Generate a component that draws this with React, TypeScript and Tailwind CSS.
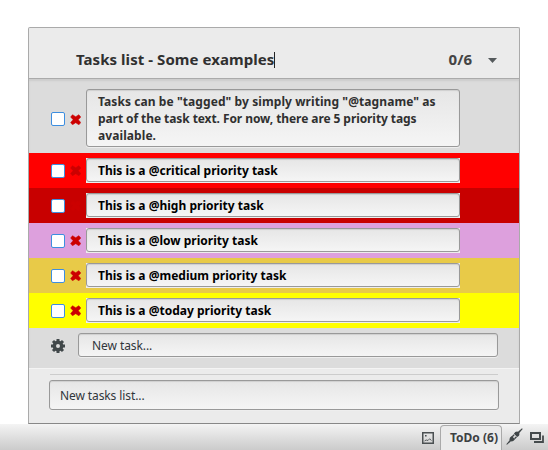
import React from 'react';

const field =
  'rounded-[3px] border border-[#999] bg-gradient-to-b from-[#e6e6e6] to-[#f5f5f5] shadow-[inset_0_1px_1px_#cfcfcf,0_1px_0_#eeeeee]';

function Cross() {
  return (
    <svg className="ml-[5px] h-[11px] w-[11px] shrink-0" viewBox="0 0 11 11" fill="#cc0000">
      <path d="M2.5 .7 5.7 2.7 8.8 .7 10.8 3 8.3 5.7 10.8 8.6 8.9 10.8 5.7 8.7 2.5 10.8 .6 8.6 3.1 5.7 .6 3Z" stroke="#cc0000" strokeWidth=".5" />
    </svg>
  );
}

function Controls() {
  return (
    <>
      <span className="h-[14px] w-[14px] shrink-0 rounded-[2px] border border-[#3d8ee0] bg-white" />
      <Cross />
    </>
  );
}

function Task({ color, text }: { color: string; text: string }) {
  return (
    <div className={`flex h-[35px] items-center pl-[22px] ${color}`}>
      <Controls />
      <div className="ml-[5px] flex h-[25px] w-[374px] bg-[#eeeeee] pb-px">
        <div className={`flex w-full items-center pt-[2px] pl-[11px] text-[12px] leading-[16px] font-bold tracking-[0.015px] whitespace-nowrap text-black ${field}`}>
          <span>{text}</span>
        </div>
      </div>
    </div>
  );
}

function Gear() {
  return (
    <svg className="h-[14px] w-[14px]" viewBox="0 0 14 14" fill="none" stroke="#41484a">
      <circle cx="7" cy="7" r="3.7" strokeWidth="3.4" />
      <path d="M7 0v3M7 11v3M0 7h3M11 7h3M2 2l2 2M10 10l2 2M2 12l2-2M10 4l2-2" strokeWidth="3" />
    </svg>
  );
}

function PictureIcon() {
  return (
    <svg className="h-[12px] w-[12px]" viewBox="0 0 12 12" fill="none" stroke="#4b5052">
      <rect x=".75" y=".75" width="10.5" height="10.5" strokeWidth="1.5" />
      <path d="M2.5 9 4.2 8 6 8.5 7.6 6.8 9.5 8.5" strokeWidth=".9" />
      <path d="M3 3.8h1.6" strokeWidth="1.5" />
    </svg>
  );
}

function PlugIcon() {
  return (
    <svg className="h-[17px] w-[17px]" viewBox="0 0 17 17" fill="#3f4547">
      <path d="M.3 16.2 3.6 12.2Q2.9 9.5 5.8 8L9 11.3Q7.4 14 4.9 13.3L1 16.8Z" />
      <path d="M16.7.9 13.3 4.9Q14 7.7 11.2 9L7.9 5.8Q9.4 3 12 3.7L16 .2Z" />
      <path d="M6.2 8.8 8.2 6.8M8.5 10.8l2-2" stroke="#3f4547" strokeWidth="1.3" />
    </svg>
  );
}

function WindowsIcon() {
  return (
    <svg className="h-[12px] w-[15px]" viewBox="0 0 15 12" fill="none" stroke="#454b4d">
      <path d="M1 1h9v6H1Z" strokeWidth="2" />
      <path d="M13 3.5V10H4" strokeWidth="1.8" />
    </svg>
  );
}

export default function App() {
  return (
    <div className="flex h-[450px] w-[548px] flex-col overflow-hidden bg-white pt-[27px] font-['Noto_Sans',sans-serif] text-[#31363b]">
      <div className="ml-[28px] flex h-[397px] w-[492px] flex-col rounded-t-[2px] border border-[#aaa] border-b-[#888] bg-[#ebebeb]">
        <header className="flex h-[51px] shrink-0 items-center border-b border-[#aaa] pt-[13px] pl-[47px]">
          <h1 className="text-[15px] font-bold tracking-[0.06px] whitespace-nowrap text-[#303030]">Tasks list - Some examples</h1>
          <span className="h-[16px] w-px bg-[#222]" />
          <span className="mr-[16px] ml-auto text-[15px] font-bold text-[#444]">0/6</span>
          <svg className="mt-[2px] mr-[22px] h-[5px] w-[9px]" viewBox="0 0 9 5">
            <path d="M0 0h9L4.5 5Z" fill="#555a5c" />
          </svg>
        </header>
        <main className="h-[289px] shrink-0 bg-[#dcdcdc] shadow-[inset_0_2px_2px_#cccccc]">
          <div className="flex h-[74px] pt-[10px] pl-[22px]">
            <div className="flex h-[60px] items-center">
              <Controls />
            </div>
            <div className={`ml-[5px] h-[58px] w-[374px] pt-[3px] pl-[11px] text-[12px] leading-[17px] font-bold whitespace-nowrap text-[#303030] ${field}`}>
              <div className="tracking-[0.08px]">Tasks can be "tagged" by simply writing "@tagname" as</div>
              <div className="tracking-[-0.08px]">part of the task text. For now, there are 5 priority tags</div>
              <div className="tracking-[0.08px]">available.</div>
            </div>
          </div>
          <Task color="bg-[#ff0000]" text="This is a @critical priority task" />
          <Task color="bg-[#c80000]" text="This is a @high priority task" />
          <Task color="bg-[#dda0dd]" text="This is a @low priority task" />
          <Task color="bg-[#e8ca48]" text="This is a @medium priority task" />
          <Task color="bg-[#ffff00]" text="This is a @today priority task" />
          <div className="flex h-[40px] items-start pt-[5px] pl-[22px]">
            <div className="pt-[6px]">
              <Gear />
            </div>
            <div className={`ml-[13px] flex h-[24px] w-[420px] items-center pt-[2px] pl-[13px] text-[12px] leading-[16px] tracking-[-0.08px] ${field}`}>New task...</div>
          </div>
        </main>
        <footer className="border-t border-[#f4f4f4] pt-[5px] pl-[20px]">
          <div className="ml-px h-px w-[448px] bg-[#cccccc]" />
          <div className={`mt-[5px] flex h-[30px] w-[450px] items-center pt-[2px] pl-[10px] text-[12px] tracking-[-0.1px] ${field}`}>New tasks list...</div>
        </footer>
      </div>
      <nav className="flex h-[26px] bg-gradient-to-b from-[#f4f4f4] to-[#cbcbcb]">
        <div className="ml-[422px] pt-[8px]">
          <PictureIcon />
        </div>
        <div className="mt-[1px] ml-[6px] flex h-[25px] w-[62px] items-center rounded-t-[4px] border border-b-0 border-[#aaa] bg-[#ebebeb] pl-[9px] text-[12px] font-bold whitespace-nowrap text-[#3c4042]">
          ToDo (6)
        </div>
        <div className="ml-[4px] pt-[4px]">
          <PlugIcon />
        </div>
        <div className="ml-[7px] pt-[8px]">
          <WindowsIcon />
        </div>
      </nav>
    </div>
  );
}
